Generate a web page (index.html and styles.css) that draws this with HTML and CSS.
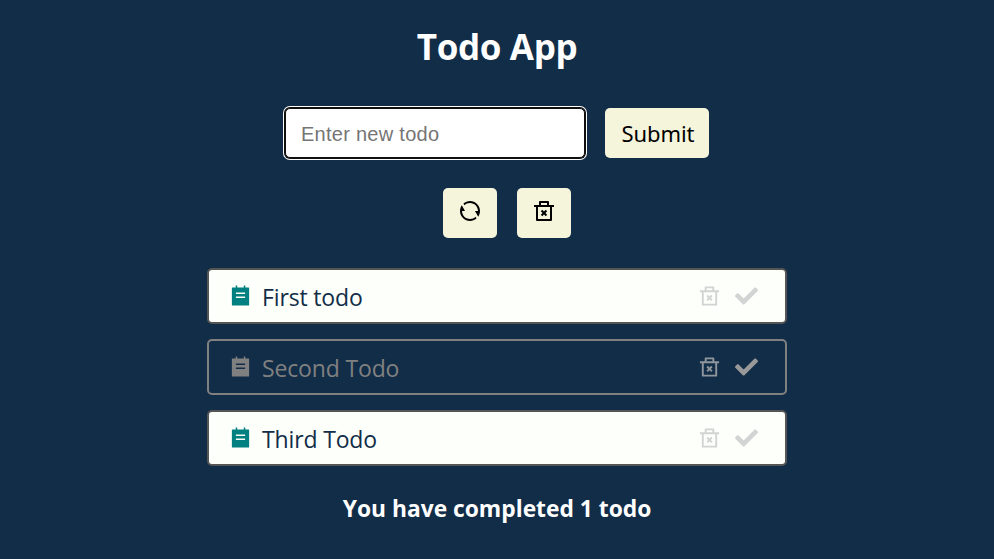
FILE: index.html
```html
<!DOCTYPE html>
<html lang="en">
<head>
<meta charset="utf-8">
<title>Todo App</title>
<link rel="stylesheet" href="styles.css">
</head>
<body>
<svg class="defs" aria-hidden="true">
  <symbol id="refresh" viewBox="0 0 24 24"><path d="M5.46257 4.43262C7.21556 2.91688 9.5007 2 12 2C17.5228 2 22 6.47715 22 12C22 14.1361 21.3302 16.1158 20.1892 17.7406L17 12H20C20 7.58172 16.4183 4 12 4C9.84982 4 7.89777 4.84827 6.46023 6.22842L5.46257 4.43262ZM18.5374 19.5674C16.7844 21.0831 14.4993 22 12 22C6.47715 22 2 17.5228 2 12C2 9.86386 2.66979 7.88416 3.8108 6.25944L7 12H4C4 16.4183 7.58172 20 12 20C14.1502 20 16.1022 19.1517 17.5398 17.7716L18.5374 19.5674Z"/></symbol>
  <symbol id="trash" viewBox="0 0 24 24"><path d="M17 6h5v2h-2v13a1 1 0 0 1-1 1H5a1 1 0 0 1-1-1V8H2V6h5V3a1 1 0 0 1 1-1h8a1 1 0 0 1 1 1v3zm1 2H6v12h12V8zm-4.586 6l1.768 1.768-1.414 1.414L12 15.414l-1.768 1.768-1.414-1.414L10.586 14l-1.768-1.768 1.414-1.414L12 12.586l1.768-1.768 1.414 1.414L13.414 14zM9 4v2h6V4H9z"/></symbol>
  <symbol id="note" viewBox="0 0 24 24"><path fill-rule="evenodd" d="M7 1h1.6v2h6.8V1H17v2h3.4a.6.6 0 0 1 .6.6v17.8a.6.6 0 0 1-.6.6H3.6a.6.6 0 0 1-.6-.6V3.6a.6.6 0 0 1 .6-.6H7V1zM7.2 8.3v1.7h9.6V8.3H7.2zm0 4.2v1.7h9.6v-1.7H7.2z"/></symbol>
  <symbol id="check" viewBox="0 0 512 512"><path d="M173.898 439.404l-166.4-166.4c-9.997-9.997-9.997-26.206 0-36.204l36.203-36.204c9.997-9.998 26.207-9.998 36.204 0L192 312.69 432.095 72.596c9.997-9.997 26.207-9.997 36.204 0l36.203 36.204c9.997 9.997 9.997 26.206 0 36.204l-294.4 294.401c-9.998 9.997-26.207 9.997-36.204-.001z"/></symbol>
</svg>
<main class="app">
  <h1 class="title">Todo App</h1>
  <form class="entry">
    <input class="field" type="text" placeholder="Enter new todo">
    <button class="button submit" type="button">Submit</button>
  </form>
  <div class="actions">
    <button class="button tool" type="button" aria-label="Refresh"><svg class="icon"><use href="#refresh"/></svg></button>
    <button class="button tool" type="button" aria-label="Delete all"><svg class="icon"><use href="#trash"/></svg></button>
  </div>
  <ul class="list">
    <li class="todo">
      <svg class="icon note"><use href="#note"/></svg><span class="label">First todo</span>
      <svg class="icon bin"><use href="#trash"/></svg><svg class="icon check"><use href="#check"/></svg>
    </li>
    <li class="todo done">
      <svg class="icon note"><use href="#note"/></svg><span class="label">Second Todo</span>
      <svg class="icon bin"><use href="#trash"/></svg><svg class="icon check"><use href="#check"/></svg>
    </li>
    <li class="todo">
      <svg class="icon note"><use href="#note"/></svg><span class="label">Third Todo</span>
      <svg class="icon bin"><use href="#trash"/></svg><svg class="icon check"><use href="#check"/></svg>
    </li>
  </ul>
  <p class="summary">You have completed 1 todo</p>
</main>
</body>
</html>
```
FILE: styles.css
```css
* { box-sizing: border-box; }
body {
  margin: 0;
  height: 559px;
  overflow: hidden;
  background: #122d48;
  color: #fff;
  font-family: "Open Sans", "Noto Sans", sans-serif;
}
.defs { position: absolute; width: 0; height: 0; }
.app { display: flex; flex-direction: column; align-items: center; }
.title {
  margin: 22px 0 0;
  font-size: 35px;
  line-height: 50px;
  height: 50px;
  font-weight: 700;
  letter-spacing: -0.35px;
}
.entry { display: flex; gap: 20px; margin: 36px 0 0; height: 50px; }
.field {
  width: 300px;
  height: 50px;
  padding: 3px 15px 0;
  border: 1px solid #101010;
  border-radius: 5px;
  outline: 0;
  box-shadow: 0 0 0 1px #101010, 0 0 0 2px #fff;
  background: #fff;
  font: 20px "Liberation Sans", Arial, sans-serif;
  letter-spacing: 0.27px;
}
.field::placeholder { color: #757575; }
.button {
  display: flex;
  align-items: center;
  justify-content: center;
  height: 50px;
  padding: 0;
  border: 0;
  border-radius: 5px;
  background: #f5f5dc;
  color: #000;
}
.submit {
  width: 104px;
  padding-left: 2px;
  font: 22px "Noto Sans", sans-serif;
  letter-spacing: -0.1px;
}
.actions { display: flex; gap: 20px; margin: 30px 0 0 20px; }
.tool { width: 54px; padding-bottom: 4px; }
.icon { width: 24px; height: 24px; fill: currentColor; flex: none; }
.list {
  display: grid;
  gap: 15px;
  width: 580px;
  margin: 30px 0 0;
  padding: 0;
  list-style: none;
}
.todo {
  display: flex;
  align-items: center;
  height: 56px;
  padding: 0 27px 0 20px;
  border: 2px solid #555;
  border-radius: 5px;
  background: #fdfffa;
  color: #122d48;
  font-size: 23px;
}
.note { color: #008080; width: 23px; }
.label {
  flex: 1;
  margin-left: 10px;
  padding-top: 2px;
  line-height: 50px;
  letter-spacing: -0.15px;
  white-space: nowrap;
}
.bin { color: #d3d3d3; width: 23px; margin-right: 14px; }
.check { color: #d3d3d3; width: 23px; }
.done { background: transparent; border-color: #808080; color: #808080; }
.done .note { color: #808080; }
.done .bin { color: #8f969c; }
.done .check { color: #999; }
.summary { margin: 28px 0 0; font-size: 22.8px; font-weight: 700; line-height: 30px; }
```
